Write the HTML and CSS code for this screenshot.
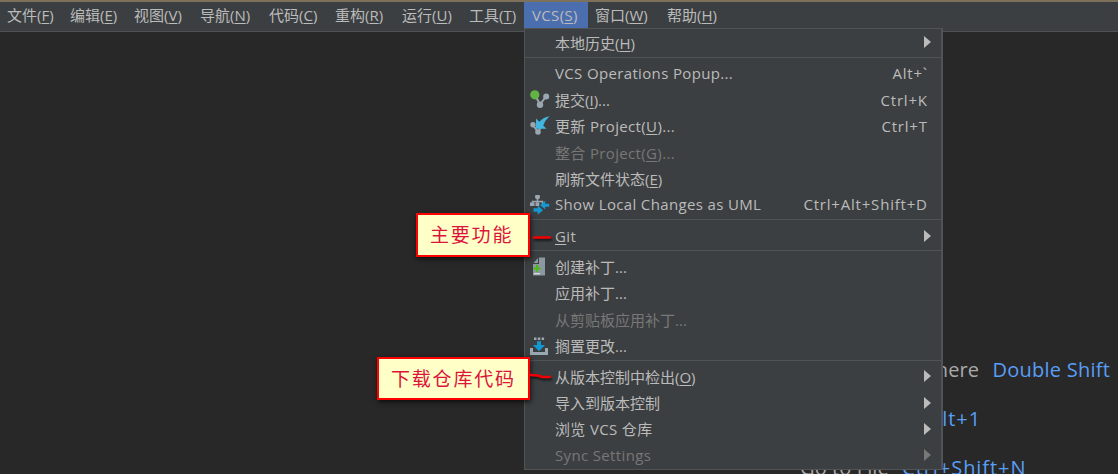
FILE: index.html
```html
<!DOCTYPE html>
<html lang="zh-CN">
<head>
    <meta charset="UTF-8">
    <title>VCS</title>
    <link rel="stylesheet" href="styles.css">
</head>
<body>
    <!-- Menu bar -->
    <nav class="menubar">
        <span>文件(<u>F</u>)</span>
        <span>编辑(<u>E</u>)</span>
        <span>视图(<u>V</u>)</span>
        <span>导航(<u>N</u>)</span>
        <span>代码(<u>C</u>)</span>
        <span>重构(<u>R</u>)</span>
        <span>运行(<u>U</u>)</span>
        <span>工具(<u>T</u>)</span>
        <span class="active latin">VCS(<u>S</u>)</span>
        <span>窗口(<u>W</u>)</span>
        <span>帮助(<u>H</u>)</span>
    </nav>

    <!-- Editor hints -->
    <main class="editor">
        <div class="hint">Search Everywhere <kbd>Double Shift</kbd></div>
        <div class="hint">Project View <kbd class="combo">Alt+1</kbd></div>
        <div class="hint">Go to File <kbd class="combo">Ctrl+Shift+N</kbd></div>
    </main>

    <!-- VCS menu -->
    <div class="popup">
        <div class="item"><span class="label">本地历史(<u>H</u>)</span><i class="arrow"></i></div>
        <div class="separator"></div>
        <div class="item"><span class="label latin">VCS Operations Popup...</span><span class="shortcut">Alt+`</span></div>
        <div class="item">
            <svg class="icon" viewBox="0 0 20 20">
                <path d="M5 5l5 9.500 6-8" fill="none" stroke="#9aa7b0" stroke-width="2"/>
                <circle cx="10" cy="14.800" r="3.200" fill="#9aa7b0"/>
                <circle cx="16.200" cy="6.500" r="3" fill="#9aa7b0"/>
                <circle cx="4.800" cy="4.800" r="4.600" fill="#62b543"/>
            </svg>
            <span class="label">提交(<u>I</u>)...</span><span class="shortcut">Ctrl+K</span>
        </div>
        <div class="item">
            <svg class="icon" viewBox="0 0 20 20">
                <path d="M3 9l5 7 3-5" fill="none" stroke="#9aa7b0" stroke-width="1.800"/>
                <circle cx="3" cy="8.800" r="2.700" fill="#9aa7b0"/>
                <circle cx="8" cy="16" r="2.800" fill="#9aa7b0"/>
                <path d="M6 2.500v10.300h10.500l-3.300-3.400q1.500-4.800 6.300-9.200-6 .8-10.200 5.600z" fill="#40b6e0"/>
            </svg>
            <span class="label latin">更新 Project(<u>U</u>)...</span><span class="shortcut">Ctrl+T</span>
        </div>
        <div class="item disabled"><span class="label latin">整合 Project(<u>G</u>)...</span></div>
        <div class="item"><span class="label">刷新文件状态(<u>E</u>)</span></div>
        <div class="item">
            <svg class="icon" viewBox="0 0 20 20">
                <path d="M7.500 3v8M2.500 9V6.500h10V9" fill="none" stroke="#9aa7b0" stroke-width="1.500"/>
                <circle cx="7.500" cy="1.800" r="2.500" fill="#9aa7b0"/>
                <path d="M0 7.500h4.500V11H0zM5.500 7.500h3.800V11H5.500z" fill="#9aa7b0"/>
                <path d="M19.200 8.800v3h-4v2.700l-5-4.200 5-4.600v3.100zM3.500 13.300h4.200v-2.700l5.300 4.700-5.300 4.500v-3H3.500z" fill="#1598d2"/>
            </svg>
            <span class="label latin">Show Local Changes as UML</span><span class="shortcut">Ctrl+Alt+Shift+D</span>
        </div>
        <div class="separator"></div>
        <div class="item"><span class="label latin"><u>G</u>it</span><i class="arrow"></i></div>
        <div class="separator"></div>
        <div class="item">
            <svg class="icon" viewBox="0 0 20 20">
                <path d="M9 .5h6v18H3V7h6z" fill="#8c989f"/>
                <path d="M8 1v5H3.500z" fill="#8c989f"/>
                <path d="M6 8h2v2.500h2.500v2H8V15H6v-2.500H3.500v-2H6z" fill="#4cbb17"/>
                <path d="M4 16h6v1.300H4z" fill="#d9dde0"/>
            </svg>
            <span class="label">创建补丁...</span>
        </div>
        <div class="item"><span class="label">应用补丁...</span></div>
        <div class="item disabled"><span class="label">从剪贴板应用补丁...</span></div>
        <div class="item">
            <svg class="icon" viewBox="0 0 20 20">
                <path d="M0 12h3v4h12v-4h3v7H0z" fill="#9aa7b0"/>
                <path d="M4 1.500h2.500V4H4zM7.800 1.500h2.500V4H7.800zM11.600 1.500h2.500V4h-2.500z" fill="#9aa7b0"/>
                <path d="M7 5.200h4V9h4l-6 6.200L3 9h4z" fill="#1598d2"/>
            </svg>
            <span class="label">搁置更改...</span>
        </div>
        <div class="separator"></div>
        <div class="item"><span class="label">从版本控制中检出(<u>O</u>)</span><i class="arrow"></i></div>
        <div class="item"><span class="label">导入到版本控制</span><i class="arrow"></i></div>
        <div class="item"><span class="label latin">浏览 VCS 仓库</span><i class="arrow"></i></div>
        <div class="item disabled"><span class="label latin">Sync Settings</span><i class="arrow"></i></div>
    </div>

    <!-- Annotations -->
    <div class="callout callout-git">主要功能</div>
    <div class="callout callout-checkout">下载仓库代码</div>
    <svg class="pointer pointer-git" viewBox="0 0 24 12"><path d="M4 5.500h16"/></svg>
    <svg class="pointer pointer-checkout" viewBox="0 0 24 12"><path d="M0 4l8 .5 4 1.500h8"/></svg>
</body>
</html>
```
FILE: styles.css
```css
body {
    margin: 0;
    width: 1118px;
    height: 474px;
    overflow: hidden;
    position: relative;
    background: #282828;
    color: #bbbbbb;
    font-family: "Open Sans", "Noto Sans CJK SC", sans-serif;
    font-size: 15px;
}

u {
    text-decoration: underline;
    text-decoration-thickness: 1px;
    text-underline-offset: 2px;
}

.latin {
    letter-spacing: 0.35px;
}

/* Menu bar */
.menubar {
    box-sizing: border-box;
    height: 32px;
    border-top: 2px solid #7d715b;
    border-bottom: 1px solid #515151;
    background: #3c3f41;
    display: grid;
    grid-template-columns: 63px 64px 66px 69px 66px 67px 67px 62px 64px 72px 72px;
    line-height: 27px;
    white-space: nowrap;
}

.menubar span {
    padding-left: 7px;
}

.menubar .active {
    padding-left: 8px;
    height: 26px;
    background: #4b6eaf;
}

/* Editor hints */
.editor {
    padding: 313px 0 0 800px;
    font-size: 20px;
    color: #a9a9a9;
}

.hint {
    height: 49px;
    line-height: 49px;
    white-space: nowrap;
    letter-spacing: 0.1px;
}

.hint kbd {
    font-family: inherit;
    color: #589df6;
    margin-left: 8px;
    letter-spacing: 0.25px;
}

.hint .combo {
    letter-spacing: 0.95px;
}

/* VCS menu */
.popup {
    position: absolute;
    left: 524px;
    top: 28px;
    box-sizing: border-box;
    width: 419px;
    height: 442px;
    padding-top: 1px;
    border: 1px solid #515355;
    border-right-width: 2px;
    background: #3c3f41;
}

.item {
    position: relative;
    display: flex;
    align-items: center;
    justify-content: space-between;
    box-sizing: border-box;
    height: 26.2px;
    padding: 0 14px 1.6px 30px;
    white-space: nowrap;
}

.item.disabled {
    color: #777777;
}

.shortcut {
    letter-spacing: 0.8px;
    margin-right: -0.8px;
}

.icon {
    position: absolute;
    left: 5px;
    top: 2.5px;
    width: 20px;
    height: 20px;
}

.arrow {
    border: 6px solid transparent;
    border-left: 7px solid #bbbbbb;
    border-right: 0;
    margin-right: -4px;
}

.disabled .arrow {
    border-left-color: #777777;
}

.separator {
    height: 1px;
    margin: 0.8px 0 3.2px;
    background: #515355;
}

/* Annotations */
.callout {
    position: absolute;
    box-sizing: border-box;
    height: 44px;
    border: 2px solid #ff0000;
    background: #ffffc8;
    box-shadow: 1px 2px 5px rgba(0, 0, 0, 0.7);
    color: #dc143c;
    font-family: "Noto Sans CJK SC", sans-serif;
    font-size: 19px;
    line-height: 37px;
    letter-spacing: 1.8px;
    padding-left: 12px;
    white-space: nowrap;
}

.callout-git {
    left: 416px;
    top: 213px;
    width: 114px;
}

.callout-checkout {
    left: 377px;
    top: 357px;
    width: 153px;
    height: 43px;
}

.pointer {
    position: absolute;
    left: 530px;
    width: 24px;
    height: 12px;
    fill: none;
    stroke: #f00000;
    stroke-width: 2.5;
    stroke-linecap: round;
    filter: drop-shadow(1px 2px 1px rgba(0, 0, 0, 0.7));
}

.pointer-git {
    top: 232px;
}

.pointer-checkout {
    top: 371px;
}
```
